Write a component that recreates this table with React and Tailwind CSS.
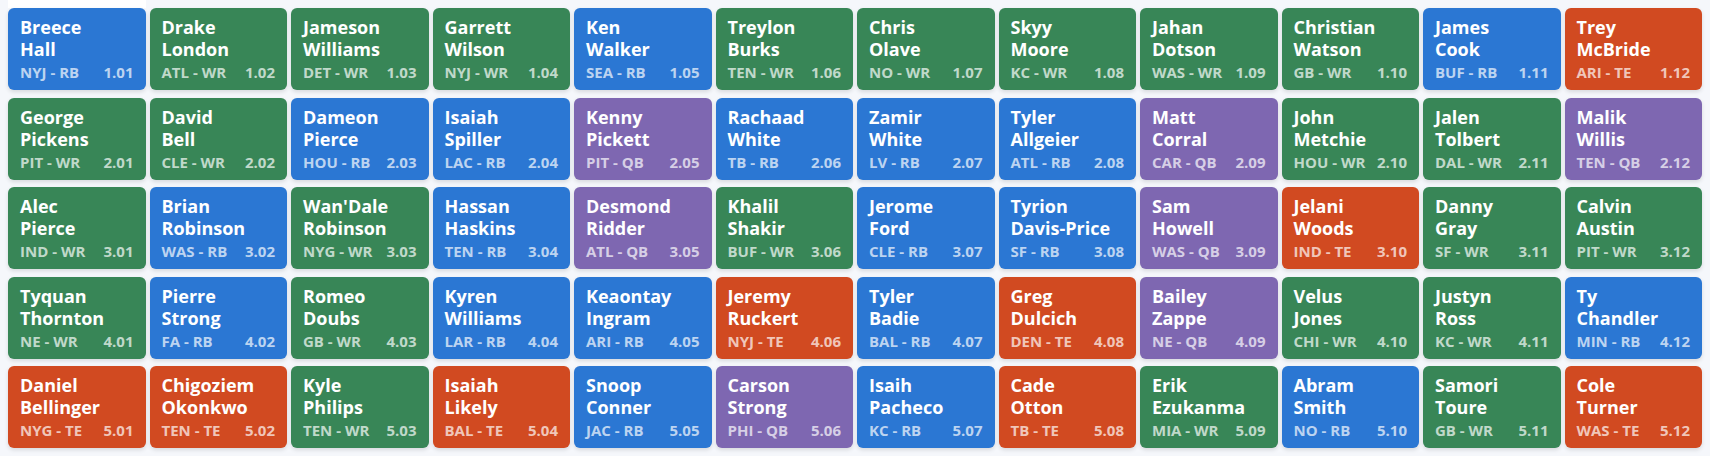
const rounds = [
  [
    ["Breece", "Hall", "NYJ", "RB"],
    ["Drake", "London", "ATL", "WR"],
    ["Jameson", "Williams", "DET", "WR"],
    ["Garrett", "Wilson", "NYJ", "WR"],
    ["Ken", "Walker", "SEA", "RB"],
    ["Treylon", "Burks", "TEN", "WR"],
    ["Chris", "Olave", "NO", "WR"],
    ["Skyy", "Moore", "KC", "WR"],
    ["Jahan", "Dotson", "WAS", "WR"],
    ["Christian", "Watson", "GB", "WR"],
    ["James", "Cook", "BUF", "RB"],
    ["Trey", "McBride", "ARI", "TE"],
  ],
  [
    ["George", "Pickens", "PIT", "WR"],
    ["David", "Bell", "CLE", "WR"],
    ["Dameon", "Pierce", "HOU", "RB"],
    ["Isaiah", "Spiller", "LAC", "RB"],
    ["Kenny", "Pickett", "PIT", "QB"],
    ["Rachaad", "White", "TB", "RB"],
    ["Zamir", "White", "LV", "RB"],
    ["Tyler", "Allgeier", "ATL", "RB"],
    ["Matt", "Corral", "CAR", "QB"],
    ["John", "Metchie", "HOU", "WR"],
    ["Jalen", "Tolbert", "DAL", "WR"],
    ["Malik", "Willis", "TEN", "QB"],
  ],
  [
    ["Alec", "Pierce", "IND", "WR"],
    ["Brian", "Robinson", "WAS", "RB"],
    ["Wan'Dale", "Robinson", "NYG", "WR"],
    ["Hassan", "Haskins", "TEN", "RB"],
    ["Desmond", "Ridder", "ATL", "QB"],
    ["Khalil", "Shakir", "BUF", "WR"],
    ["Jerome", "Ford", "CLE", "RB"],
    ["Tyrion", "Davis-Price", "SF", "RB"],
    ["Sam", "Howell", "WAS", "QB"],
    ["Jelani", "Woods", "IND", "TE"],
    ["Danny", "Gray", "SF", "WR"],
    ["Calvin", "Austin", "PIT", "WR"],
  ],
  [
    ["Tyquan", "Thornton", "NE", "WR"],
    ["Pierre", "Strong", "FA", "RB"],
    ["Romeo", "Doubs", "GB", "WR"],
    ["Kyren", "Williams", "LAR", "RB"],
    ["Keaontay", "Ingram", "ARI", "RB"],
    ["Jeremy", "Ruckert", "NYJ", "TE"],
    ["Tyler", "Badie", "BAL", "RB"],
    ["Greg", "Dulcich", "DEN", "TE"],
    ["Bailey", "Zappe", "NE", "QB"],
    ["Velus", "Jones", "CHI", "WR"],
    ["Justyn", "Ross", "KC", "WR"],
    ["Ty", "Chandler", "MIN", "RB"],
  ],
  [
    ["Daniel", "Bellinger", "NYG", "TE"],
    ["Chigoziem", "Okonkwo", "TEN", "TE"],
    ["Kyle", "Philips", "TEN", "WR"],
    ["Isaiah", "Likely", "BAL", "TE"],
    ["Snoop", "Conner", "JAC", "RB"],
    ["Carson", "Strong", "PHI", "QB"],
    ["Isaih", "Pacheco", "KC", "RB"],
    ["Cade", "Otton", "TB", "TE"],
    ["Erik", "Ezukanma", "MIA", "WR"],
    ["Abram", "Smith", "NO", "RB"],
    ["Samori", "Toure", "GB", "WR"],
    ["Cole", "Turner", "WAS", "TE"],
  ],
];

const posColors = {
  RB: "bg-[#2b77d3]",
  WR: "bg-[#388657]",
  TE: "bg-[#d14a21]",
  QB: "bg-[#7e67b1]",
};

const PickCard = ({ first, last, team, pos, pick }) => (
  <div
    className={`flex flex-col rounded-md px-3 pt-2 pb-2 text-white shadow-[0_2px_4px_rgba(0,0,0,0.12)] ${posColors[pos]}`}
  >
    <div className="text-[18px] font-bold leading-[22px]">
      <div className="whitespace-nowrap">{first}</div>
      <div className="whitespace-nowrap">{last}</div>
    </div>
    <div className="mt-0.5 flex items-center justify-between text-[15px] font-bold leading-5 text-white/70">
      <span className="whitespace-nowrap">
        {team} - {pos}
      </span>
      <span>{pick}</span>
    </div>
  </div>
);

export default function App() {
  return (
    <div
      className="min-h-[456px] w-full bg-[#f5f7fb] px-2 pb-2"
      style={{ fontFamily: '"Open Sans", "Noto Sans", sans-serif' }}
    >
      {/* header strip above the board, first slot highlighted */}
      <div className="grid h-2 grid-cols-12 gap-x-1">
        <div className="bg-white" />
      </div>
      <div className="grid grid-cols-12 gap-x-1 gap-y-[7.5px]">
        {rounds.map((round, r) =>
          round.map(([first, last, team, pos], i) => (
            <PickCard
              key={`${r}-${i}`}
              first={first}
              last={last}
              team={team}
              pos={pos}
              pick={`${r + 1}.${String(i + 1).padStart(2, "0")}`}
            />
          ))
        )}
      </div>
    </div>
  );
}
